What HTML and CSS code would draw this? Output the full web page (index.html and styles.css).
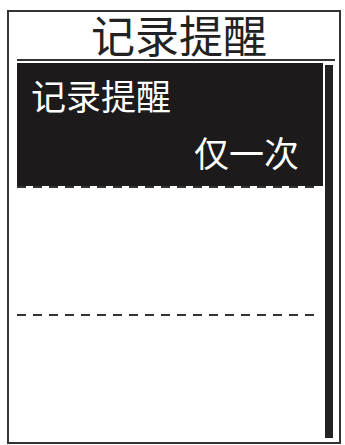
FILE: index.html
```html
<!DOCTYPE html>
<html lang="zh">
<head>
<meta charset="utf-8">
<link rel="stylesheet" href="styles.css">
</head>
<body>
<div class="frame">
  <div class="header">记录提醒</div>
  <div class="content">
    <div class="list">
      <div class="item selected">
        <div class="label">记录提醒</div>
        <div class="value">仅一次</div>
      </div>
      <div class="dash"></div>
      <div class="item"></div>
      <div class="dash"></div>
    </div>
    <div class="scrollbar"></div>
  </div>
</div>
</body>
</html>
```
FILE: styles.css
```css
html, body {
  margin: 0;
  padding: 0;
  background: #fff;
}
body {
  font-family: "Noto Sans CJK SC", "Noto Sans", sans-serif;
}
.frame {
  box-sizing: border-box;
  width: 334px;
  height: 434px;
  margin: 10px 0 0 7px;
  border: 2px solid #333;
  padding: 0 4px 0 8px;
  display: flex;
  flex-direction: column;
}
.header {
  box-sizing: border-box;
  height: 49px;
  border-bottom: 2px solid #333;
  font-size: 44px;
  line-height: 45px;
  text-align: center;
  color: #222;
  padding-left: 6px;
}
.content {
  flex: 1;
  display: flex;
  gap: 2px;
  margin-top: 2px;
}
.list {
  flex: 1;
  display: flex;
  flex-direction: column;
}
.item {
  box-sizing: border-box;
  height: 126px;
}
.item.selected {
  height: 123px;
  background: #1c1a1a;
  color: #fff;
  padding: 12px 24px 0 14px;
  display: flex;
  flex-direction: column;
}
.label {
  font-size: 35px;
  line-height: 40px;
}
.value {
  font-size: 35px;
  line-height: 40px;
  text-align: right;
  margin-top: 17px;
}
.dash {
  height: 2px;
  margin-right: 4px;
  background: repeating-linear-gradient(to right, #333 0 9px, transparent 9px 16px);
}
.scrollbar {
  width: 8px;
  margin: 2px 2px 4px 0;
  background: #222;
}
```
